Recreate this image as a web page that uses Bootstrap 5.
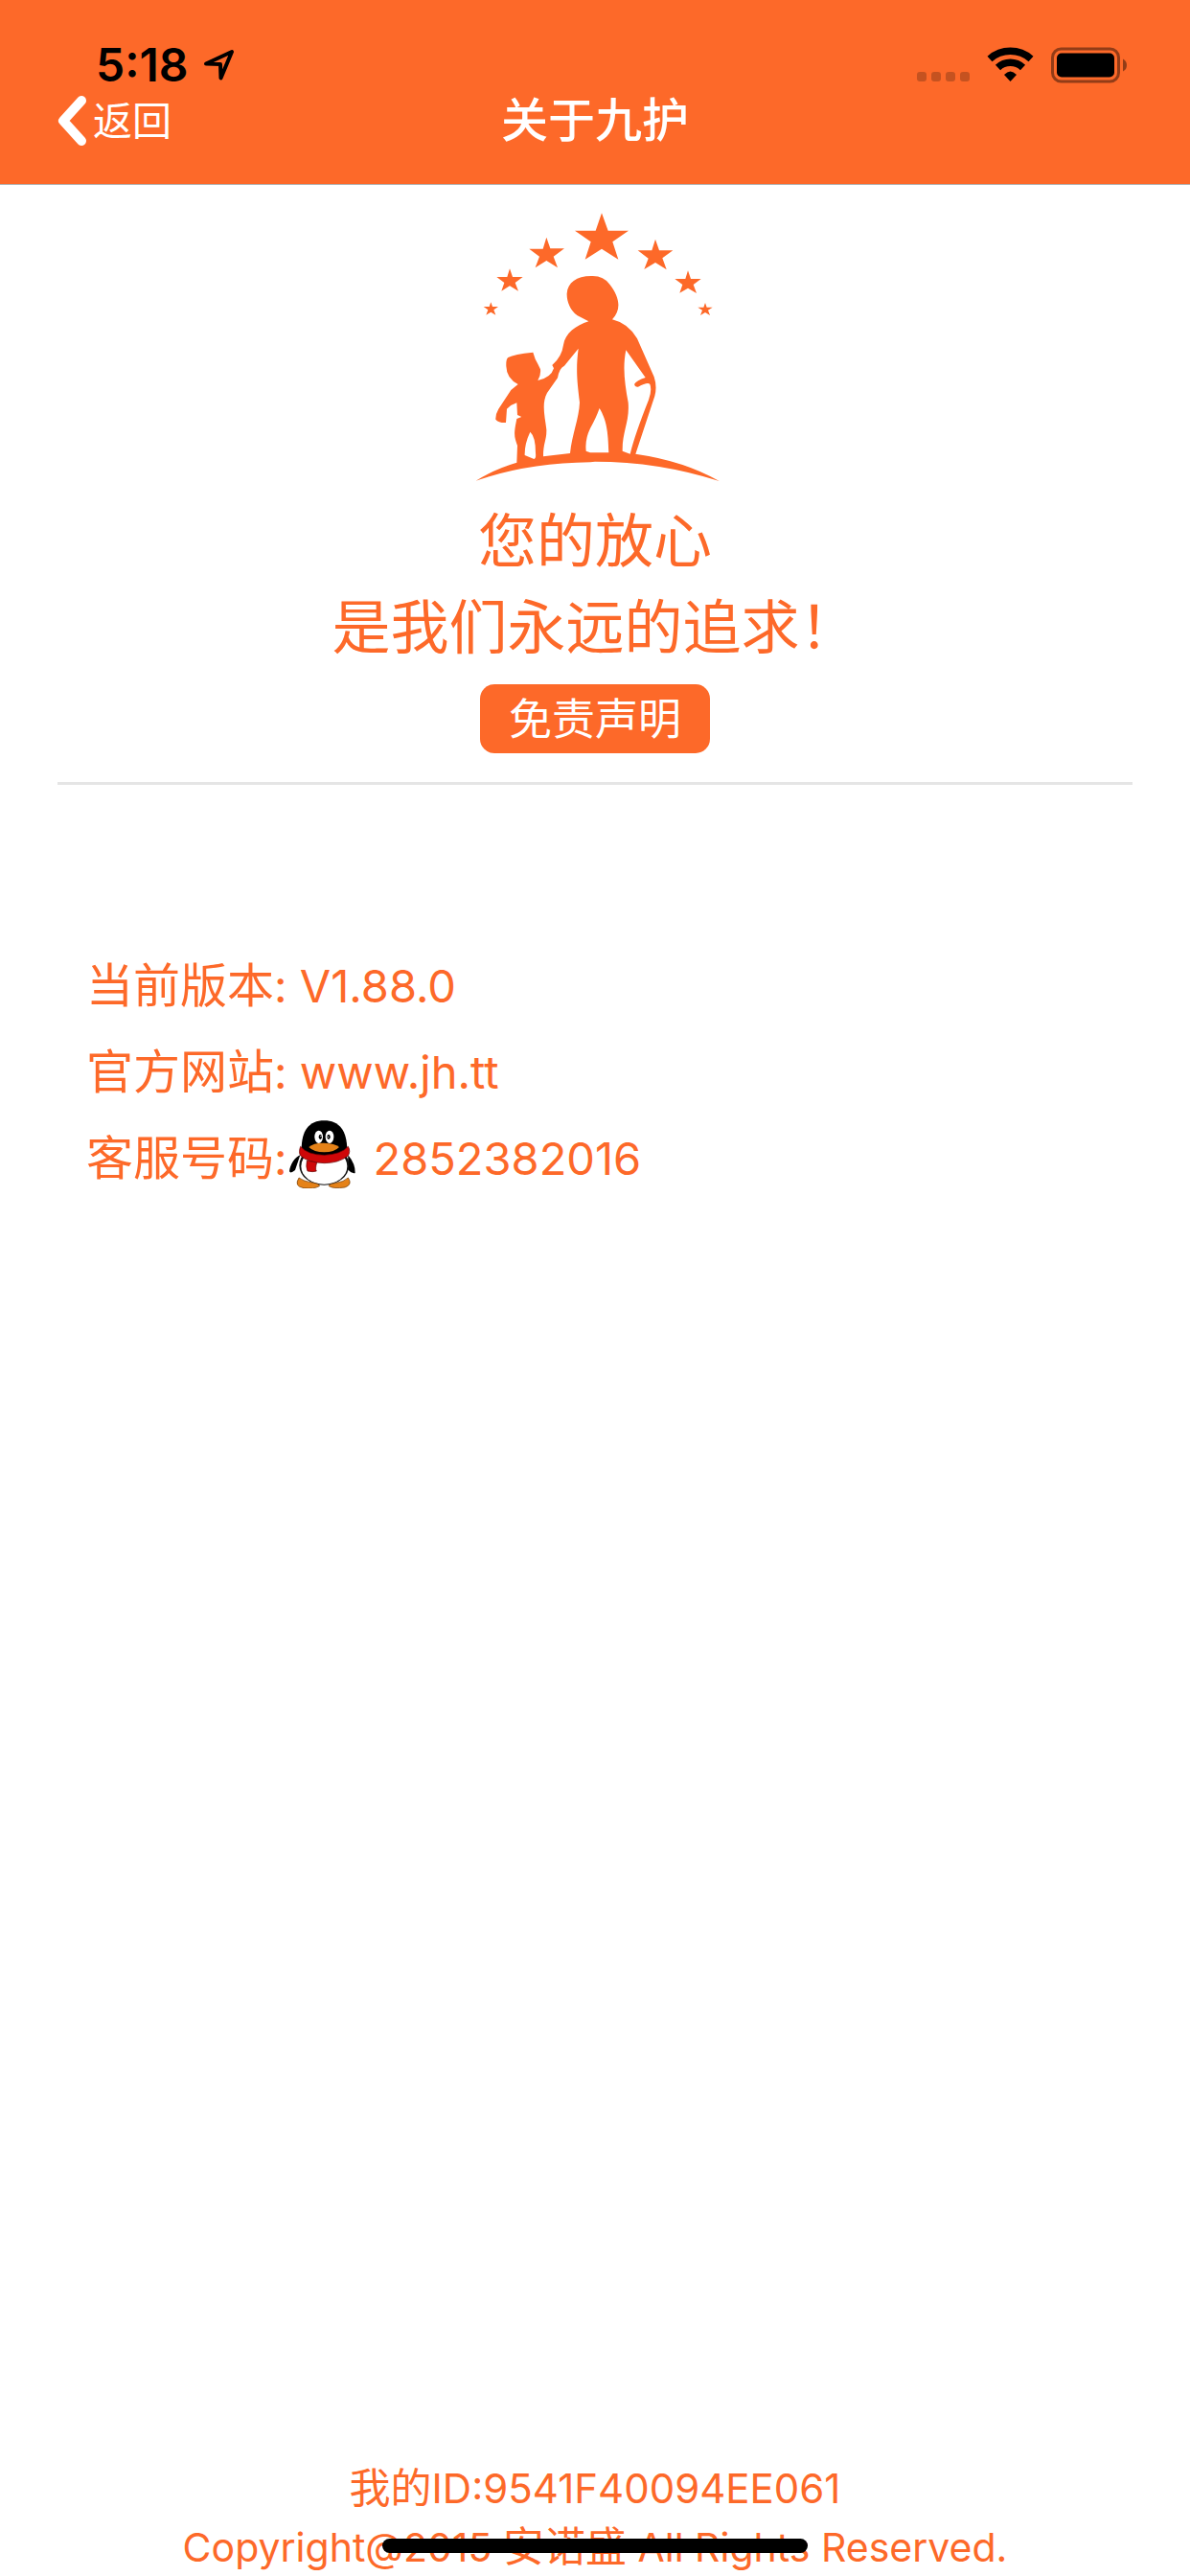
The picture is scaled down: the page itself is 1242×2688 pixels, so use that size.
<!DOCTYPE html>
<html lang="zh-CN">
<head>
<meta charset="utf-8">
<meta name="viewport" content="width=device-width, initial-scale=1">
<title>关于九护</title>
<link rel="stylesheet" href="https://cdn.jsdelivr.net/npm/bootstrap@5.3.0/dist/css/bootstrap.min.css">
<style>
  :root { --brand: #fd6929; }
  body { font-family: Inter, "Noto Sans CJK SC", sans-serif; color: var(--brand); background: #fff; }
  svg { display: block; flex: none; }
  .app-header { background: var(--brand); border-bottom: 1px solid #b2b2b2; padding: 44px 60px 32px; }
  .status-row { height: 48px; padding: 0 4px 0 40px; color: #000; }
  .clock { font-size: 48px; line-height: 48px; font-weight: 600; }
  .title-row { height: 68px; color: #fff; }
  .back-link { font-size: 41px; line-height: 68px; gap: 7px; }
  .page-title { font-size: 49px; line-height: 68px; font-weight: 500; }
  .hero { margin: 0 60px; padding: 17px 0 30px; border-bottom: 3px solid #e5e5e5; }
  .slogan { font-size: 61px; line-height: 90px; margin: 10px 0 14px; }
  .brand-btn { --bs-btn-bg: var(--brand); --bs-btn-color: #fff; --bs-btn-hover-bg: #e55b1f; --bs-btn-hover-color: #fff;
    --bs-btn-border-width: 0; --bs-btn-border-radius: 15px; width: 240px; padding: 2px 0 0; font-size: 45px; line-height: 70px; }
  .info-list { padding: 165px 90px 0; font-size: 47px; line-height: 90px; }
  .info-list .cjk { font-size: 49px; }
  .qq-icon { margin: 0 18px 12px 0; }
  .page-foot { font-size: 41px; line-height: 60px; }
  .page-foot .cjk { font-size: 43px; }
  .device-id { font-size: 42px; }
  .home-bar { width: 444px; height: 15px; border-radius: 8px; background: #000; bottom: 24px; }
</style>
<script src="https://cdn.jsdelivr.net/npm/bootstrap@5.3.0/dist/js/bootstrap.bundle.min.js"></script>
</head>
<body>
<div class="d-flex flex-column min-vh-100 position-relative">
  <header class="app-header">
    <div class="status-row d-flex align-items-center justify-content-between">
      <div class="d-flex align-items-center gap-3">
        <span class="clock">5:18</span>
        <svg width="32" height="34" viewBox="0 0 32 34" fill="none" stroke="#000" stroke-width="4" stroke-linejoin="round" aria-hidden="true"><path d="M2 15.500L29 3L17.500 30.500L17 16Z"/></svg>
      </div>
      <svg width="222" height="38" viewBox="0 0 222 38" aria-hidden="true">
        <g fill="#000" fill-opacity=".22"><rect x="1" y="26" width="10" height="10" rx="3"/><rect x="16" y="26" width="10" height="10" rx="3"/><rect x="31" y="26" width="10" height="10" rx="3"/><rect x="46" y="26" width="10" height="10" rx="3"/></g>
        <g fill="none" stroke="#000" stroke-width="7.500"><path d="M77 12.500A32.500 32.500 0 0 1 120 12.500"/><path d="M85.500 21.500A19 19 0 0 1 111.500 21.500"/></g>
        <path d="M92 29Q98.500 22 105 29L98.500 36Z"/>
        <g opacity=".42"><rect x="142.500" y="2" width="69" height="34" rx="9" fill="none" stroke="#000" stroke-width="3"/><path d="M216 12.500Q220 14.500 220 19T216 25.500Z"/></g>
        <rect x="147" y="6.500" width="60" height="25" rx="5"/>
      </svg>
    </div>
    <nav class="title-row row g-0 align-items-center">
      <div class="col-3"><a href="#" class="back-link d-inline-flex align-items-center text-white text-decoration-none">
        <svg width="30" height="54" viewBox="0 0 30 54" fill="none" stroke="#fff" stroke-width="10" stroke-linecap="round" stroke-linejoin="round" aria-hidden="true"><path d="M25 6L6 27L25 48"/></svg>返回</a></div>
      <h1 class="page-title col-6 text-center mb-0">关于九护</h1>
      <div class="col-3"></div>
    </nav>
  </header>

  <main class="flex-grow-1">
    <section class="hero d-flex flex-column align-items-center text-center">
      <svg width="320" height="300" viewBox="0 30 960 900" fill="#fd6929" role="img" aria-label="九护">
        <path d="M501 67L521 122H585L535 157L553 212L501 179L449 212L467 157L417 122H482Z"/>
        <path d="M328 143L340 178H384L350 203L363 238L328 216L293 238L306 203L274 179H317Z"/>
        <path d="M669 149L681 184H724L691 208L704 244L669 222L634 243L647 209L614 184H658Z"/>
        <path d="M213 241L222 267H254L230 285L240 311L213 295L187 311L196 285L172 267H205Z"/>
        <path d="M771 247L780 273H812L788 291L798 318L771 302L745 317L754 291L730 273H763Z"/>
        <path d="M154 346L159 360H177L163 370L169 386L154 377L139 386L145 370L131 360H149Z"/>
        <path d="M825 348L830 362H848L834 371L840 387L825 378L810 387L816 371L802 362H820Z"/>
        <path d="M107 905Q166 868 235 848L237 795C228 768 224 764 235 711L250 705L237 699L235 661Q216 667 204 680L201 723Q178 724 169 713Q168 697 178 680L217 621L239 603Q203 585 202 547Q201 523 208 519Q227 508 286 503L293 524Q302 540 309 556Q311 575 301 591Q342 583 351 553L346 543Q376 517 381 480C387 443 420 419 460 406L425 388C402 373 391 342 392 319C394 285 422 264 468 264Q506 262 526 290C557 330 564 369 534 400Q584 412 612 460L665 580Q675 610 667 640L607 821Q760 843 869 906Q680 845 480 845L465 847Q270 849 107 905ZM428 491L384 545Q368 552 363 583L330 630C312 664 323 702 328 745C329 778 318 785 318 829L402 819C408 760 430 710 432 660C425 600 419 560 428 491ZM577 496C566 550 573 600 584 660C589 720 565 750 566 812L590 821Q605 760 648 652Q659 620 652 603Q646 594 615 611Q605 613 603 603Q610 591 638 582ZM494 678Q484 707 465 741Q448 776 452 812L465 817H523C521 748 516 715 494 678ZM277 752Q259 790 260 825L289 837Q296 836 294 818Q294 767 277 752Z" fill-rule="evenodd"/>
      </svg>
      <p class="slogan">您的放心<br>是我们永远的追求！</p>
      <button type="button" class="btn brand-btn">免责声明</button>
    </section>

    <section class="info-list">
      <div><span class="cjk">当前版本</span>: V1.88.0</div>
      <div><span class="cjk">官方网站</span>: <a href="#" class="text-reset text-decoration-none">www.jh.tt</a></div>
      <div class="d-flex align-items-center"><span><span class="cjk">客服号码</span>:</span>
        <svg class="qq-icon" width="72" height="74" viewBox="60 42 216 222" role="img" aria-label="QQ">
          <path d="M100 160C84 165 68 190 66 211Q70 219 84 207ZM250 160Q273 188 272 216Q262 219 249 205Z"/>
          <ellipse cx="175" cy="192" rx="78" ry="62" fill="#111"/>
          <ellipse cx="175" cy="195" rx="72" ry="56" fill="#fff"/>
          <path d="M104 143C104 84 127 52 175 52S246 84 247 143Q234 166 176 167Q117 164 104 143Z"/>
          <ellipse cx="158" cy="103" rx="13" ry="20" fill="#fff"/><ellipse cx="192" cy="103" rx="13" ry="20" fill="#fff"/>
          <ellipse cx="163" cy="103" rx="5" ry="8"/><ellipse cx="189" cy="103" rx="5" ry="8"/><circle cx="165" cy="101" r="2" fill="#fff"/><circle cx="187" cy="103" r="2" fill="#fff"/>
          <path d="M127 135Q142 121 175 122T222 135Q207 151 175 151T127 135Z" fill="#e58218"/>
          <path d="M101 133Q122 159 176 160Q229 157 250 133Q259 149 249 163Q220 185 176 185Q124 184 101 162Q94 151 101 133Z" fill="#cf0708" stroke="#5c0000" stroke-width="2"/>
          <path d="M121 177L152 183Q146 205 151 210Q140 214 123 210Q117 198 121 177Z" fill="#cf0708" stroke="#5c0000" stroke-width="2"/>
          <path d="M96 231Q111 242 137 246Q163 250 160 257Q143 267 111 263Q79 258 96 231ZM250 231Q236 244 212 247Q188 251 190 257Q204 266 240 261Q265 252 250 231Z" fill="#e58218" stroke="#6b3500" stroke-width="2"/>
        </svg>
        <span>2852382016</span></div>
    </section>
  </main>

  <footer class="page-foot text-center">
    <div class="device-id"><span class="cjk">我的</span>ID:9541F40094EE061</div>
    <div>Copyright@2015 <span class="cjk">安诺盛</span> All Rights Reserved.</div>
  </footer>
  <div class="home-bar position-absolute start-50 translate-middle-x"></div>
</div>
</body>
</html>
